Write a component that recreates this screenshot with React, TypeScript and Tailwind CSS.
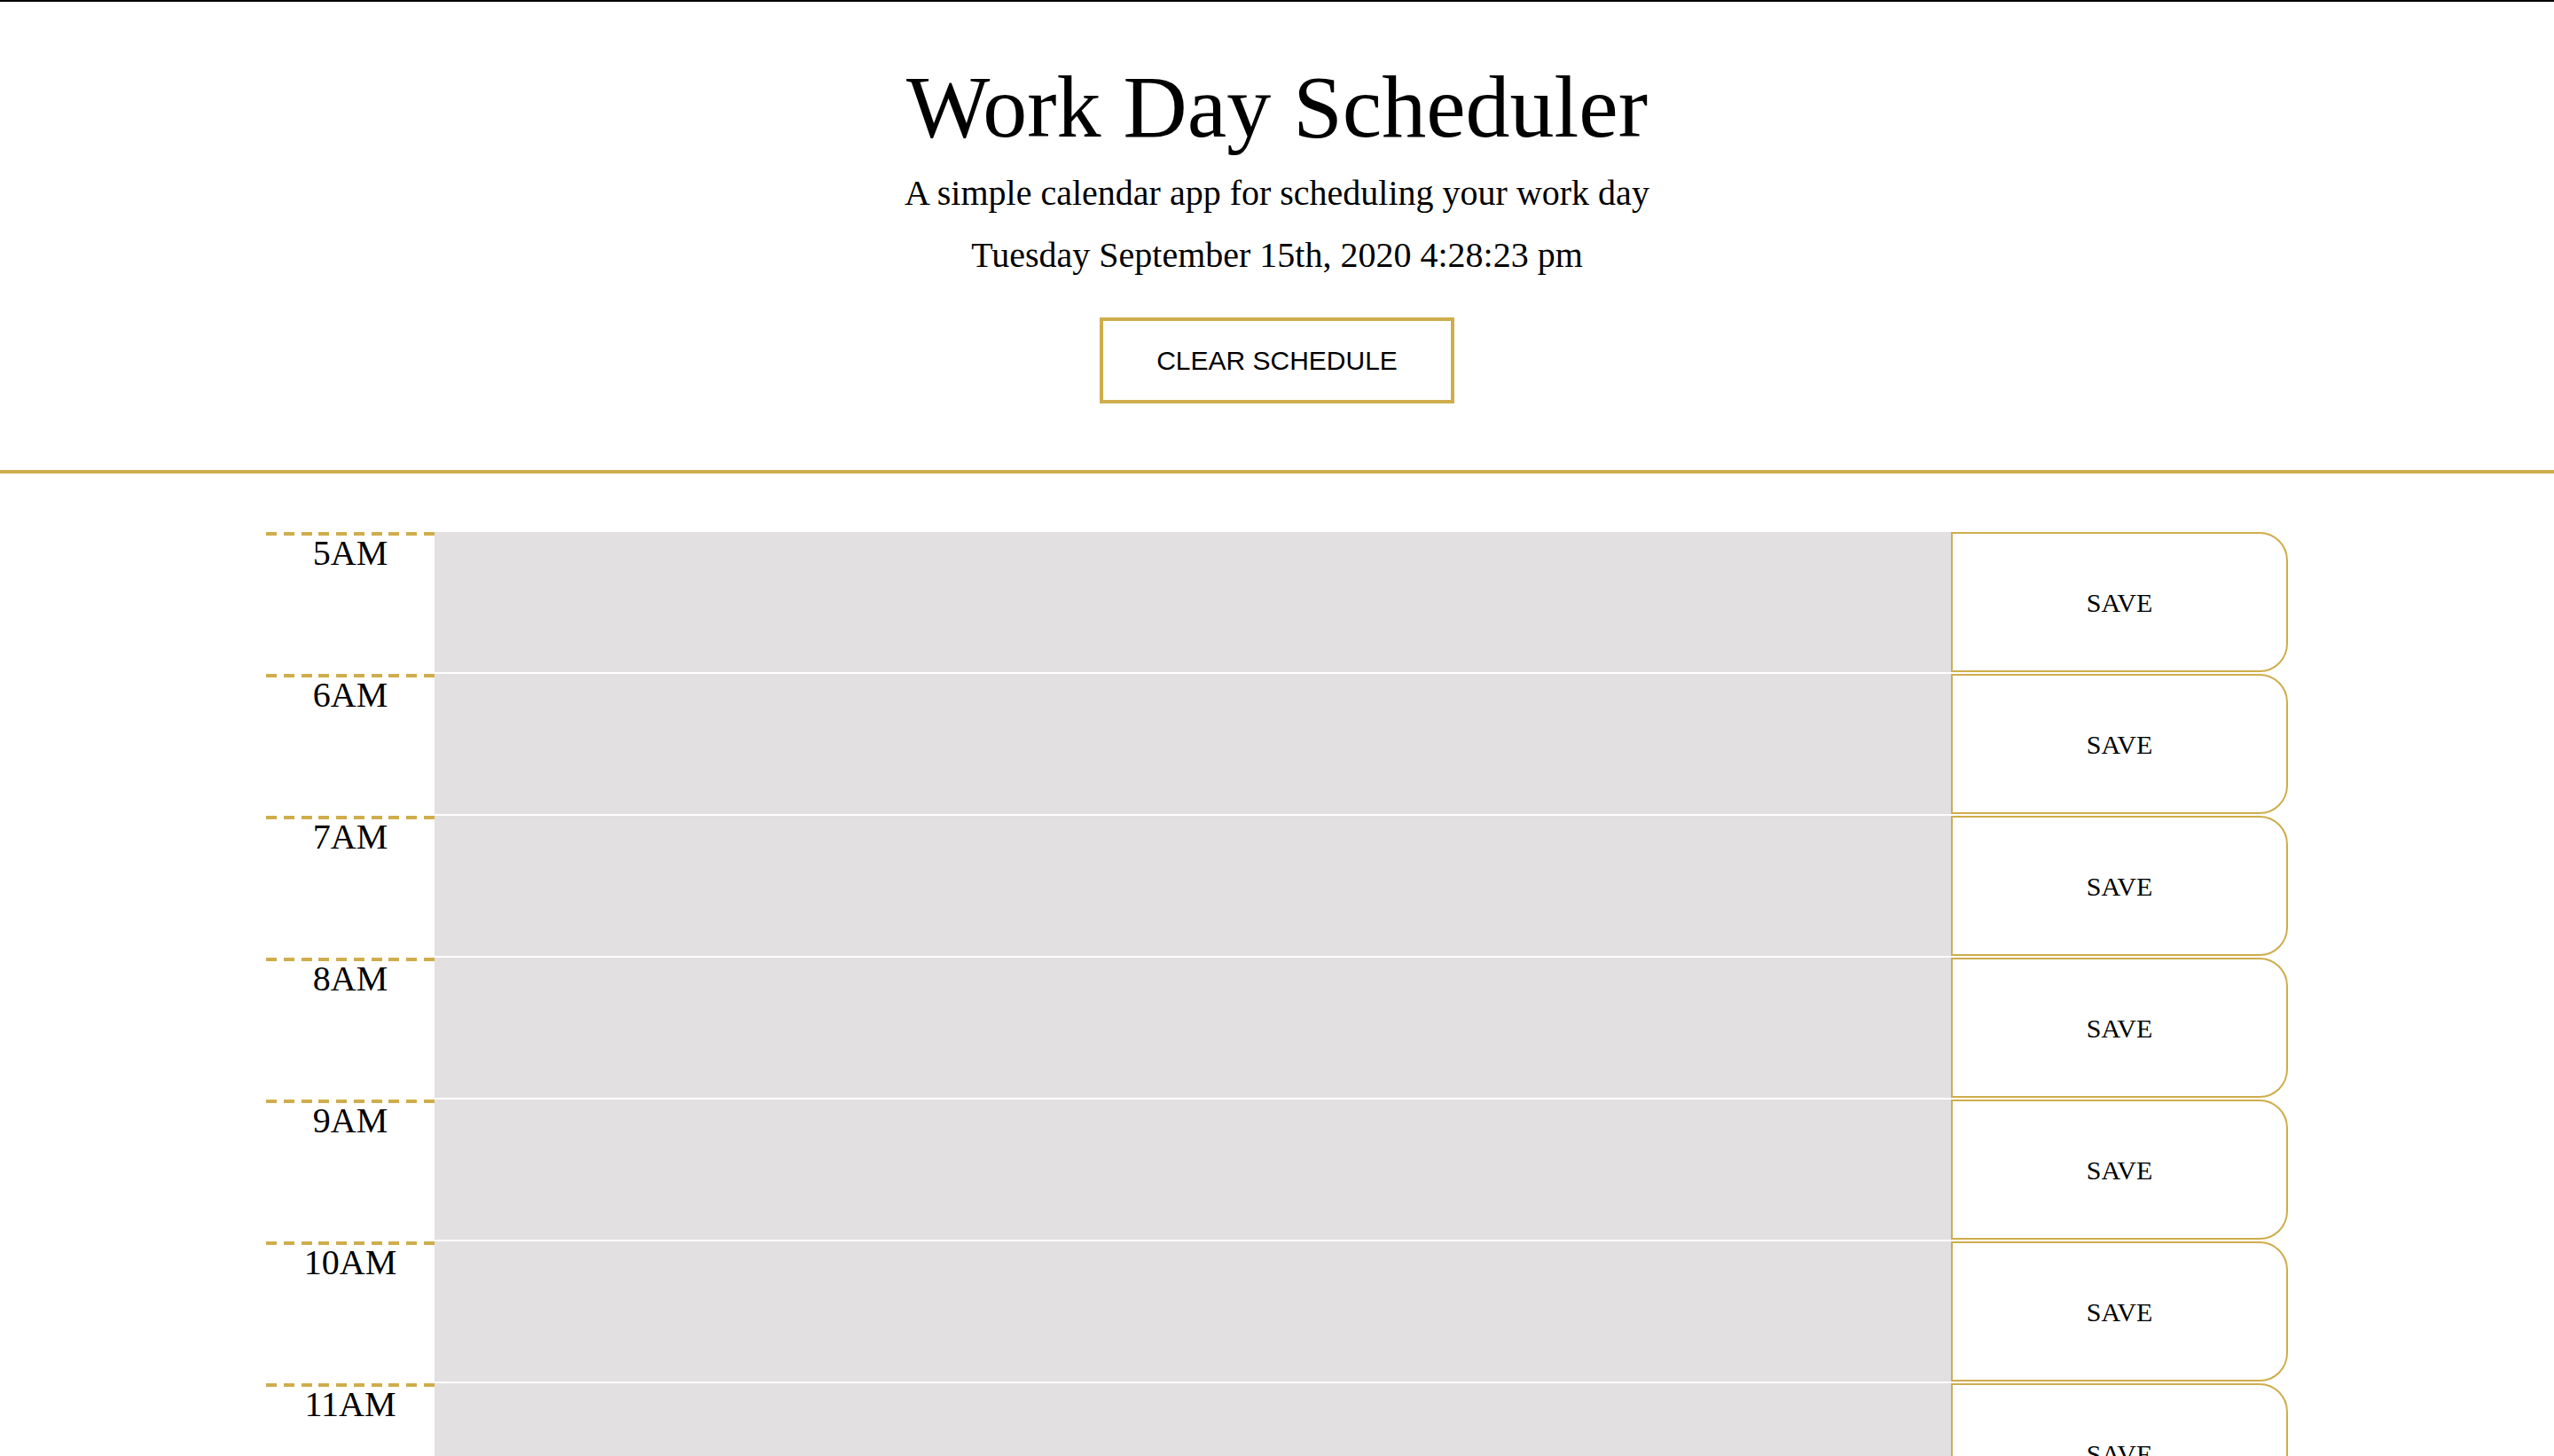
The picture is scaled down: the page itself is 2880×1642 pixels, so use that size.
const hours = ["5AM", "6AM", "7AM", "8AM", "9AM", "10AM", "11AM"];

function HourRow({ label }: { label: string }) {
  return (
    <div className="flex h-[160px]">
      <div className="w-[190px] shrink-0">
        <div className="h-[4px] w-full bg-[repeating-linear-gradient(to_right,#cfad4c_0px,#cfad4c_12px,transparent_12px,transparent_19.78px)]" />
        <div className="text-center text-[40px] leading-[40px] text-black">{label}</div>
      </div>
      <textarea className="h-[158px] w-[1710px] shrink-0 resize-none bg-[#e2e0e1] p-4 outline-none" />
      <button className="flex h-[158px] w-[380px] shrink-0 items-center justify-center rounded-r-[32px] border-2 border-[#cfad4c] bg-white text-[30px] text-black">
        SAVE
      </button>
    </div>
  );
}

export default function App() {
  return (
    <div className="h-[1642px] overflow-hidden border-t-2 border-black bg-white font-['Liberation_Serif',serif] text-black">
      <header className="flex flex-col items-center border-b-4 border-[#cfad4c] pb-[75px] pt-[59px]">
        <h1 className="text-[100px] leading-[120px]">Work Day Scheduler</h1>
        <p className="mt-[7px] text-[40px] leading-[60px]">A simple calendar app for scheduling your work day</p>
        <p className="mt-[10px] text-[40px] leading-[60px]">Tuesday September 15th, 2020 4:28:23 pm</p>
        <button className="mt-[40px] flex h-[97px] w-[400px] items-center justify-center border-4 border-[#cfad4c] bg-white font-['Liberation_Sans',sans-serif] text-[30px] text-black">
          CLEAR SCHEDULE
        </button>
      </header>
      <main className="mx-auto mt-[66px] w-[2280px]">
        {hours.map((h) => (
          <HourRow key={h} label={h} />
        ))}
      </main>
    </div>
  );
}
